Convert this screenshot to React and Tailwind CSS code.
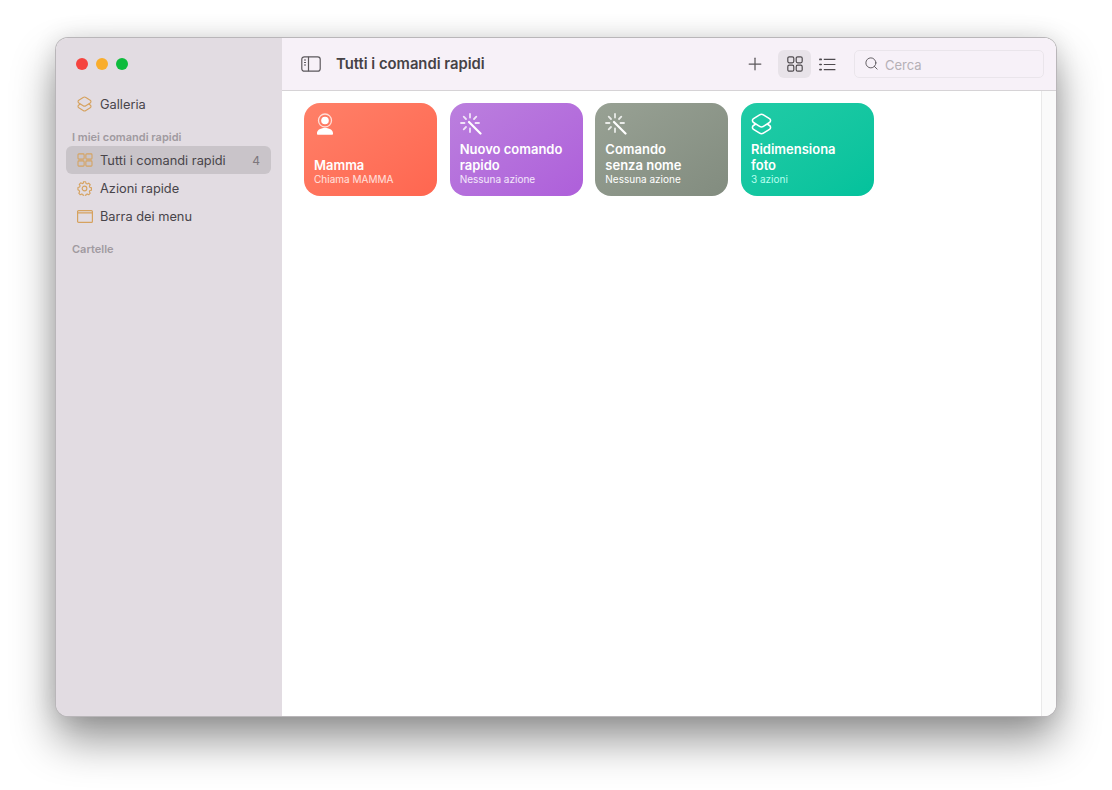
import React from 'react'
import { Plus, Search } from 'lucide-react'

const FONT = { fontFamily: 'Inter, "Noto Sans", sans-serif' }

function LayersIcon({ className }) {
  return (
    <svg viewBox="0 0 20 21" fill="none" stroke="currentColor" strokeWidth="1.500" strokeLinejoin="round" className={className}>
      <path d="M8.200 1.800C9.300 1.100 10.700 1.100 11.800 1.800L17.600 5.400C19 6.300 19 8.200 17.600 9.100L11.800 12.800C10.700 13.500 9.300 13.500 8.200 12.800L2.400 9.100C1 8.200 1 6.300 2.400 5.400Z" />
      <path d="M4.600 10.500L2.400 11.900C1 12.800 1 14.700 2.400 15.600L8.200 19.200C9.300 19.900 10.700 19.900 11.800 19.200L17.600 15.600C19 14.700 19 12.800 17.600 11.900L15.400 10.500" />
    </svg>
  )
}

function GridIcon({ className }) {
  return (
    <svg viewBox="0 0 18 16" fill="none" stroke="currentColor" strokeWidth="1.200" className={className}>
      <rect x="1" y="1" width="7" height="6" rx="1" />
      <rect x="10" y="1" width="7" height="6" rx="1" />
      <rect x="1" y="9" width="7" height="6" rx="1" />
      <rect x="10" y="9" width="7" height="6" rx="1" />
    </svg>
  )
}

function SquareGridIcon({ className }) {
  return (
    <svg viewBox="0 0 16 16" fill="none" stroke="currentColor" strokeWidth="1.200" className={className}>
      <rect x=".8" y=".8" width="6" height="6" rx="1.500" />
      <rect x="9.200" y=".8" width="6" height="6" rx="1.500" />
      <rect x=".8" y="9.200" width="6" height="6" rx="1.500" />
      <rect x="9.200" y="9.200" width="6" height="6" rx="1.500" />
    </svg>
  )
}

function GearIcon({ className }) {
  return (
    <svg viewBox="0 0 16 16" fill="none" stroke="currentColor" strokeWidth="1.200" strokeLinejoin="round" className={className}>
      <path d="M6.800 1.200h2.400l.4 1.800 1.300.6 1.600-.9 1.600 1.700-.9 1.500.5 1.300 1.800.5v2.400l-1.800.5-.5 1.300.9 1.500-1.600 1.700-1.600-.9-1.300.6-.4 1.800H6.800l-.4-1.800-1.300-.6-1.600.9-1.600-1.700.9-1.500-.5-1.300L1 9.700V7.300l1.800-.5.500-1.300-.9-1.500L4 2.300l1.600.9 1.300-.6z" transform="translate(0 -.4)" />
      <circle cx="8" cy="8" r="2.500" />
    </svg>
  )
}

function MenuBarIcon({ className }) {
  return (
    <svg viewBox="0 0 16 13" fill="none" stroke="currentColor" strokeWidth="1.200" className={className}>
      <rect x=".6" y=".6" width="14.800" height="11.800" rx="1" />
      <path d="M.6 2.800h14.800" />
    </svg>
  )
}

function PersonIcon({ className }) {
  return (
    <svg viewBox="0 0 18 22" className={className}>
      <circle cx="9" cy="7.500" r="6.500" fill="none" stroke="currentColor" strokeWidth="1.300" opacity=".75" />
      <circle cx="9" cy="7.500" r="3.800" fill="currentColor" />
      <path d="M1 21c-.4-3.800 3-6 8-6s8.400 2.200 8 6c0 .4-.3.700-.8.700H1.800c-.5 0-.8-.3-.8-.7z" fill="currentColor" />
    </svg>
  )
}

function WandIcon({ className }) {
  return (
    <svg viewBox="0 0 22 22" fill="none" stroke="currentColor" strokeWidth="1.800" strokeLinecap="round" className={className}>
      <path d="M10 1v3.500M10 15.500V19M1 10h3.500M15.500 10H19M3.700 3.700l2.300 2.300M3.700 16.300 6 14M16.300 3.700 14 6" opacity=".8" />
      <path d="M9 9l11.500 11.500" strokeWidth="2.200" />
    </svg>
  )
}

function ListIcon({ className }) {
  return (
    <svg viewBox="0 0 18 14" fill="none" stroke="currentColor" strokeWidth="1.200" className={className}>
      <path d="M5 1.500h12.500M5 7h12.500M5 12.500h12.500" />
      <path d="M.8 1.500h1.400M.8 7h1.400M.8 12.500h1.400" strokeWidth="1.800" strokeLinecap="round" />
    </svg>
  )
}

function SidebarIcon({ className }) {
  return (
    <svg viewBox="0 0 20 16" fill="none" stroke="currentColor" strokeWidth="1.200" className={className}>
      <rect x=".8" y=".8" width="18.400" height="14.400" rx="2.500" />
      <path d="M7.500 .8v14.400" />
      <path d="M3 4h2M3 6.500h2M3 9h2" />
    </svg>
  )
}

const CARDS = [
  { title: 'Mamma', sub: 'Chiama MAMMA', icon: 'person', bg: 'bg-gradient-to-br from-[#ff8068] to-[#ff6650]', subColor: 'text-white/80' },
  { title: 'Nuovo comando\nrapido', sub: 'Nessuna azione', icon: 'wand', bg: 'bg-gradient-to-br from-[#bb7fde] to-[#ae5fda]', subColor: 'text-white/85' },
  { title: 'Comando\nsenza nome', sub: 'Nessuna azione', icon: 'wand', bg: 'bg-gradient-to-br from-[#98a194] to-[#828c7f]', subColor: 'text-white' },
  { title: 'Ridimensiona\nfoto', sub: '3 azioni', icon: 'layers', bg: 'bg-gradient-to-br from-[#20cba6] to-[#03c29c]', subColor: 'text-[#b8fff0]' },
]

function Card({ title, sub, icon, bg, subColor }) {
  return (
    <div className={`w-[133px] h-[93px] rounded-[16px] px-[10px] pt-[10px] pb-[11px] flex flex-col justify-between text-white ${bg}`}>
      <div className="h-[22px]">
        {icon === 'person' && <PersonIcon className="w-[18px] h-[22px] ml-[2px]" />}
        {icon === 'wand' && <WandIcon className="w-[22px] h-[22px]" />}
        {icon === 'layers' && <LayersIcon className="w-[21px] h-[22px]" />}
      </div>
      <div>
        <div className="text-[13px] leading-[16px] font-semibold whitespace-pre-line">{title}</div>
        <div className={`text-[10px] leading-[12px] ${subColor}`}>{sub}</div>
      </div>
    </div>
  )
}

function SideRow({ icon, label, count, active }) {
  return (
    <div className={`h-[28px] flex items-center pl-[11px] pr-[11px] rounded-[6px] ${active ? 'bg-[#c9c4c9]' : ''}`}>
      <div className="w-[23px] flex items-center text-[#d6a25f]">{icon}</div>
      <span className="text-[12.800px] text-[#48444a] flex-1 mt-[1px]">{label}</span>
      {count && <span className="text-[12px] text-[#7d777c] mt-[1px]">{count}</span>}
    </div>
  )
}

export default function App() {
  return (
    <div className="w-[1112px] h-[790px] bg-white pt-[38px] pl-[56px] overflow-hidden" style={FONT}>
      <div className="w-[1000px] h-[678px] flex rounded-[12px] overflow-hidden ring-1 ring-[#b9b6b9] shadow-[0_24px_44px_rgba(0,0,0,0.42),0_0_24px_rgba(0,0,0,0.12)]">
        {/* Sidebar */}
        <aside className="w-[226px] shrink-0 bg-[#e2dce2] pl-[10px] pr-[11px]">
          <div className="flex gap-[8px] pt-[20px] pl-[10px]">
            <span className="w-[12px] h-[12px] rounded-full bg-[#f5443f]" />
            <span className="w-[12px] h-[12px] rounded-full bg-[#f9ad2c]" />
            <span className="w-[12px] h-[12px] rounded-full bg-[#0ebb3d]" />
          </div>
          <div className="mt-[20px]">
            <SideRow icon={<LayersIcon className="w-[15px] h-[16px]" />} label="Galleria" />
          </div>
          <div className="text-[11px] font-semibold text-[#a09aa0] pl-[6px] mt-[12px] mb-[2px] leading-[14px]">I miei comandi rapidi</div>
          <SideRow active icon={<GridIcon className="w-[16px] h-[14px]" />} label="Tutti i comandi rapidi" count="4" />
          <SideRow icon={<GearIcon className="w-[15px] h-[15px]" />} label="Azioni rapide" />
          <SideRow icon={<MenuBarIcon className="w-[16px] h-[13px]" />} label="Barra dei menu" />
          <div className="text-[11px] font-semibold text-[#a09aa0] pl-[6px] mt-[12px] leading-[14px]">Cartelle</div>
        </aside>

        {/* Main */}
        <main className="flex-1 flex flex-col bg-white">
          <header className="h-[53px] shrink-0 bg-[#f7f1f8] border-b border-[#d6d3d6] flex items-center pl-[19px] pr-[12px]">
            <SidebarIcon className="w-[20px] h-[16px] text-[#5c585c]" />
            <h1 className="ml-[15px] text-[14.800px] font-semibold text-[#464246] flex-1">Tutti i comandi rapidi</h1>
            <Plus className="w-[20px] h-[20px] text-[#5c585c] mr-[13px]" strokeWidth={1.500} />
            <div className="w-[33px] h-[28px] rounded-[6px] bg-[#e8e3e9] flex items-center justify-center">
              <SquareGridIcon className="w-[16px] h-[16px] text-[#4f4b4f]" />
            </div>
            <div className="w-[33px] h-[28px] flex items-center justify-center mr-[10px]">
              <ListIcon className="w-[17px] h-[13px] text-[#4f4b4f]" />
            </div>
            <div className="w-[190px] h-[28px] rounded-[5px] border border-[#eae5eb] flex items-center pl-[9px] gap-[6px]">
              <Search className="w-[15px] h-[15px] text-[#5c585c] -mt-[2px]" strokeWidth={1.500} />
              <span className="text-[13px] text-[#b5b0b6] mt-[4px]">Cerca</span>
            </div>
          </header>
          <div className="flex-1 flex min-h-0">
            <div className="flex-1 pt-[12px] pl-[22px] flex gap-[12.670px] items-start">
              {CARDS.map((c) => <Card key={c.title} {...c} />)}
            </div>
            <div className="w-[15px] shrink-0 bg-[#fafafa] border-l border-[#e9e9e9]" />
          </div>
        </main>
      </div>
    </div>
  )
}
